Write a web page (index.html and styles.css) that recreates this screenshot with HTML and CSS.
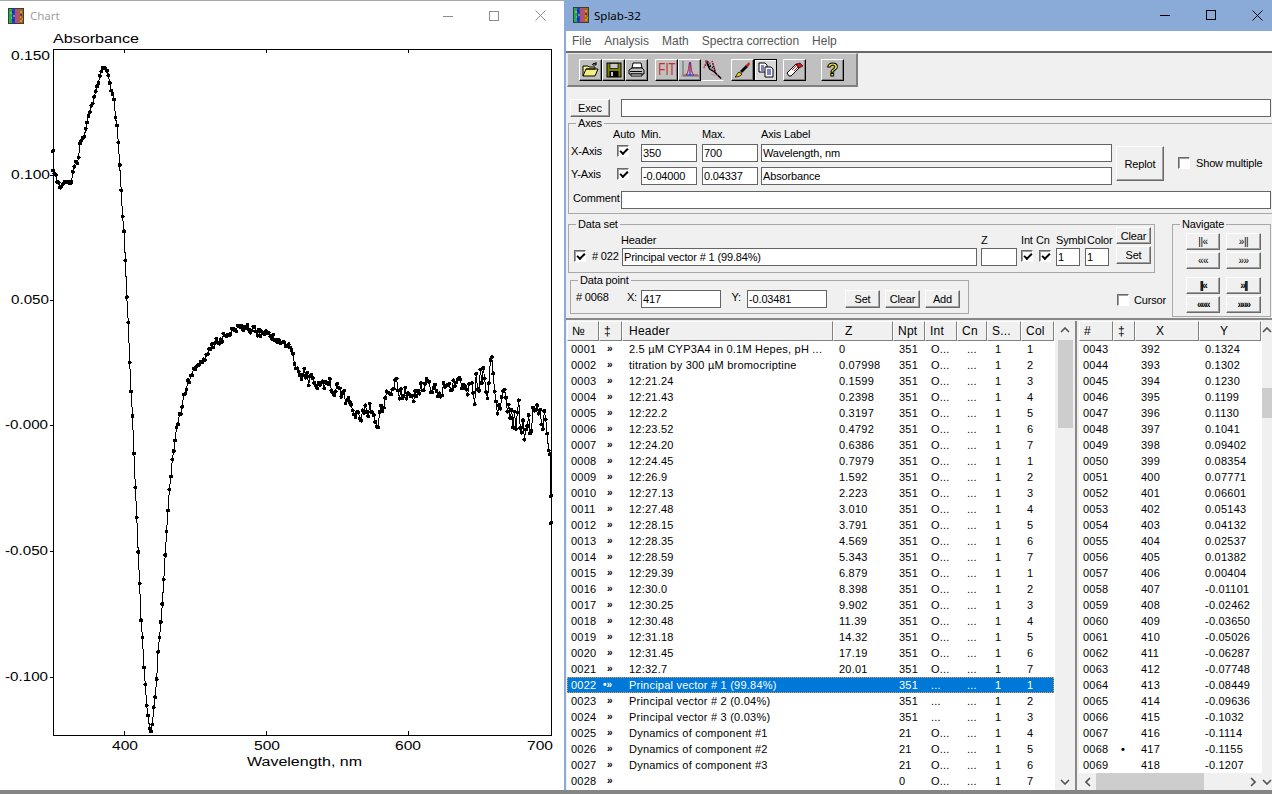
FILE: index.html
```html
<!DOCTYPE html>
<html lang="en">
<head>
<meta charset="utf-8">
<title>Splab-32</title>
<link rel="stylesheet" href="styles.css">
</head>
<body>
<svg class="defs" width="0" height="0" aria-hidden="true">
  <symbol id="appicon" viewBox="0 0 16 16">
    <rect width="16" height="16" fill="#3c3c3c"/>
    <rect x="1" y="1" width="3" height="14" fill="#1fb04c"/>
    <rect x="4" y="1" width="3" height="14" fill="#1c3fd0"/>
    <rect x="7" y="1" width="4" height="14" fill="#b0507a"/>
    <rect x="11" y="1" width="4" height="14" fill="#a8681c"/>
    <path d="M2 5h2M5 8h2M3 10h1M12 4h2M12 9h1M14 11h1M12 13h2" stroke="#e8d020" stroke-width="1"/>
    <path d="M4 4h2M12 7h2M4 12h2" stroke="#1010c0" stroke-width="1"/>
  </symbol>
  <symbol id="chev-up" viewBox="0 0 10 6"><path d="M1 5l4-4 4 4" fill="none" stroke="#505050" stroke-width="1.6"/></symbol>
  <symbol id="chev-down" viewBox="0 0 10 6"><path d="M1 1l4 4 4-4" fill="none" stroke="#505050" stroke-width="1.6"/></symbol>
  <symbol id="chev-left" viewBox="0 0 6 10"><path d="M5 1L1 5l4 4" fill="none" stroke="#505050" stroke-width="1.6"/></symbol>
  <symbol id="chev-right" viewBox="0 0 6 10"><path d="M1 1l4 4-4 4" fill="none" stroke="#505050" stroke-width="1.6"/></symbol>
</svg>

<main class="desktop">
  <section class="window chart-window">
    <header class="titlebar">
      <svg class="appicon"><use href="#appicon"/></svg>
      <span class="title title-dim">Chart</span>
      <span class="controls controls-dim">
        <svg width="10" height="10" viewBox="0 0 10 10"><path d="M0 5.5h10" stroke="currentColor"/></svg>
        <svg width="10" height="10" viewBox="0 0 10 10"><rect x=".5" y=".5" width="9" height="9" fill="none" stroke="currentColor"/></svg>
        <svg width="11" height="11" viewBox="0 0 11 11"><path d="M.5.5l10 10M10.5.5l-10 10" stroke="currentColor"/></svg>
      </span>
    </header>
    <svg id="plot" class="plot" width="564" height="760" viewBox="0 30 564 760">
      <g class="ax-text">
        <text x="53" y="42" textLength="86" lengthAdjust="spacingAndGlyphs">Absorbance</text>
        <text x="11" y="59" textLength="39" lengthAdjust="spacingAndGlyphs">0.150</text>
        <text x="11" y="178" textLength="39" lengthAdjust="spacingAndGlyphs">0.100</text>
        <text x="11" y="303" textLength="38" lengthAdjust="spacingAndGlyphs">0.050</text>
        <text x="5" y="428" textLength="43" lengthAdjust="spacingAndGlyphs">-0.000</text>
        <text x="5" y="554" textLength="43" lengthAdjust="spacingAndGlyphs">-0.050</text>
        <text x="5" y="680" textLength="43" lengthAdjust="spacingAndGlyphs">-0.100</text>
        <text x="112" y="749" textLength="26" lengthAdjust="spacingAndGlyphs">400</text>
        <text x="254" y="749" textLength="26" lengthAdjust="spacingAndGlyphs">500</text>
        <text x="395" y="749" textLength="26" lengthAdjust="spacingAndGlyphs">600</text>
        <text x="527" y="749" textLength="26" lengthAdjust="spacingAndGlyphs">700</text>
        <text x="247" y="765" textLength="115" lengthAdjust="spacingAndGlyphs">Wavelength, nm</text>
      </g>
      <path class="frame" d="M53.5 48.5H551.5V734.5H53.5ZM124.5 48v4M266.5 48v4M408.5 48v4M124.5 734v-4M266.5 734v-4M408.5 734v-4M50 174.5h4M50 299.5h4M50 424.5h4M50 550.5h4M50 676.5h4"/>
      <polyline id="curve" class="curve" points=""/>
      <path id="dots" class="dots" d=""/>
    </svg>
  </section>

  <section class="window main-window">
    <header class="titlebar titlebar-main">
      <svg class="appicon"><use href="#appicon"/></svg>
      <span class="title">Splab-32</span>
      <span class="controls">
        <svg width="10" height="10" viewBox="0 0 10 10"><path d="M0 5.5h10" stroke="currentColor"/></svg>
        <svg width="10" height="10" viewBox="0 0 10 10"><rect x=".5" y=".5" width="9" height="9" fill="none" stroke="currentColor"/></svg>
        <svg width="11" height="11" viewBox="0 0 11 11"><path d="M.5.5l10 10M10.5.5l-10 10" stroke="currentColor"/></svg>
      </span>
    </header>
    <nav class="menubar">
      <span>File</span><span>Analysis</span><span>Math</span><span>Spectra correction</span><span>Help</span>
    </nav>

    <div class="body">
      <div class="toolbar">
        <button class="tool">
          <svg width="18" height="16" viewBox="0 0 18 16"><path d="M1 14V4h5l1 1h6v2H4L1 14h12l3-7H4" fill="#f4f080" stroke="#000"/><path d="M10 3c1-2 3-2 4-1M14 0v3h-3" fill="none" stroke="#000"/></svg>
        </button>
        <button class="tool">
          <svg width="16" height="16" viewBox="0 0 16 16"><rect x="1" y="1" width="14" height="14" fill="#808000" stroke="#000"/><rect x="4" y="1.500" width="8" height="5" fill="#c8c8c8" stroke="#000" stroke-width=".7"/><rect x="3.500" y="9" width="9" height="6" fill="#000"/><rect x="5" y="10" width="2" height="4" fill="#c8c8c8"/></svg>
        </button>
        <button class="tool">
          <svg width="17" height="16" viewBox="0 0 17 16"><path d="M5 1h8l1 5H4z" fill="#fff" stroke="#000"/><path d="M1 8l3-2h10l2 2v4H1z" fill="#c0c0c0" stroke="#000"/><path d="M3 12h11v2H3z" fill="#fff" stroke="#000"/><path d="M2 9.500h12" stroke="#000"/></svg>
        </button>
        <button class="tool tool-gap fit"><span class="fit-text">FIT</span></button>
        <button class="tool">
          <svg width="20" height="19" viewBox="0 0 20 19"><path d="M3 1v15h16" fill="none" stroke="#507070"/><path d="M1 16h18" stroke="#80a0a0" stroke-dasharray="2 1"/><path d="M4 15c3 0 3-1 4-4s1-9 2-9 1 7 2 10 2 3 6 3" fill="none" stroke="#e01010"/><path d="M10 2v13M6 15h8" stroke="#1c1ce0"/></svg>
        </button>
        <button class="tool tool-flat">
          <svg width="22" height="22" viewBox="0 0 22 22"><path d="M4 1l4 9 5 3 7 7" fill="none" stroke="#000" stroke-width="1.500"/><path d="M2 9l3-8 3 3 3-2 3 10-6-3" fill="none" stroke="#c02060" stroke-width="1.200" stroke-dasharray="2 1"/><path d="M6 2l2 8M11 4l3 9M3 6h7M8 7l5 2" stroke="#000" stroke-width="1.200" stroke-dasharray="1.500 1"/><path d="M9 15l5 2 3-1" stroke="#d080a0" fill="none"/></svg>
        </button>
        <button class="tool tool-gap">
          <svg width="18" height="18" viewBox="0 0 18 18"><path d="M1 16c2-1 2-4 4-5l3 2c-1 2-4 3-7 3z" fill="#e8d020" stroke="#000" stroke-width=".8"/><path d="M6 10l6-6 2 2-6 6z" fill="#000"/><path d="M12 4l3-3 1 2-2 3z" fill="#d01818"/></svg>
        </button>
        <button class="tool tool-docs">
          <svg width="16" height="16" viewBox="0 0 16 16"><path d="M1 1h6l2 2v7H1z" fill="#fff" stroke="#000"/><path d="M7 5h6l2 2v8H7z" fill="#fff" stroke="#000"/><path d="M3 4h3M3 6h3M3 8h3" stroke="#000088"/><path d="M9 8h4M9 10h4M9 12h4" stroke="#000088"/></svg>
        </button>
        <button class="tool tool-gap6">
          <svg width="18" height="16" viewBox="0 0 18 16"><path d="M1 11L10 2l3 4-8 8H3z" fill="#fff" stroke="#000"/><path d="M10 2l4-1 3 3-4 2z" fill="#d01818" stroke="#000" stroke-width=".6"/><path d="M6 8l6-6M8 9l6-6" stroke="#d01818"/></svg>
        </button>
        <button class="tool tool-help">?</button>
      </div>

      <div class="exec-row">
        <button class="btn btn-exec">Exec</button>
        <span class="field field-long"></span>
      </div>

      <fieldset class="group group-axes">
        <legend>Axes</legend>
        <div class="axes-main">
          <div class="axes-rows">
            <div class="axes-row axes-head">
              <span class="c-label"></span><span class="c-auto">Auto</span><span class="c-min">Min.</span><span class="c-max">Max.</span><span>Axis Label</span>
            </div>
            <div class="axes-row">
              <span class="c-label c-pad">X-Axis</span>
              <span class="c-auto"><span class="check on"></span></span>
              <span class="field w56">350</span><span class="field w56 ml5">700</span><span class="field w351 ml3">Wavelength, nm</span>
            </div>
            <div class="axes-row">
              <span class="c-label c-pad">Y-Axis</span>
              <span class="c-auto"><span class="check on"></span></span>
              <span class="field w56">-0.04000</span><span class="field w56 ml5">0.04337</span><span class="field w351 ml3">Absorbance</span>
            </div>
          </div>
          <button class="btn btn-replot">Replot</button>
          <label class="show-multiple"><span class="check"></span><span>Show multiple</span></label>
        </div>
        <div class="comment-row">
          <span class="c-comment">Comment</span>
          <span class="field field-long"></span>
        </div>
      </fieldset>

      <div class="data-row">
        <div class="data-left">
          <fieldset class="group group-dataset">
            <legend>Data set</legend>
            <div class="dataset-inner">
              <div class="ds-left">
                <div class="ds-head">
                  <span class="d-a"></span><span class="d-h">Header</span><span class="d-z">Z</span><span class="d-i">Int</span><span class="d-c">Cn</span><span class="d-s">Symbl</span><span>Color</span>
                </div>
                <div class="ds-fields">
                  <span class="check on ds-check"></span>
                  <span class="ds-num"># 022</span>
                  <span class="field w355">Principal vector # 1 (99.84%)</span>
                  <span class="field w36 ml4"></span>
                  <span class="check on ds-int"></span>
                  <span class="check on ds-cn"></span>
                  <span class="field w24 ml5">1</span>
                  <span class="field w24 ml5">1</span>
                </div>
              </div>
              <div class="ds-buttons">
                <button class="btn btn-small">Clear</button>
                <button class="btn btn-small btn-set">Set</button>
              </div>
            </div>
          </fieldset>
          <div class="point-row">
            <fieldset class="group group-point">
              <legend>Data point</legend>
              <div class="point-inner">
                <span class="pt-num"># 0068</span>
                <span class="pt-x">X:</span>
                <span class="field w80">417</span>
                <span class="pt-y">Y:</span>
                <span class="field w80">-0.03481</span>
                <button class="btn btn-pt pt-first">Set</button>
                <button class="btn btn-pt pt-next">Clear</button>
                <button class="btn btn-pt pt-next">Add</button>
              </div>
            </fieldset>
            <label class="cursor"><span class="check"></span><span>Cursor</span></label>
          </div>
        </div>
        <fieldset class="group group-nav">
          <legend>Navigate</legend>
          <div class="nav-grid">
            <button class="btn nav">||«</button><button class="btn nav">»||</button>
            <button class="btn nav">««</button><button class="btn nav">»»</button>
          </div>
          <div class="nav-grid nav-bold">
            <button class="btn nav">||«</button><button class="btn nav">»||</button>
            <button class="btn nav">«««</button><button class="btn nav">»»»</button>
          </div>
        </fieldset>
      </div>

      <div class="lists">
        <div class="list list-left">
          <table class="rows rows-left">
            <thead><tr><th>№</th><th>‡</th><th>Header</th><th>Z</th><th>Npt</th><th>Int</th><th>Cn</th><th>S...</th><th>Col</th></tr></thead>
            <tbody>
              <tr><td>0001</td><td>»</td><td>2.5 µM CYP3A4 in 0.1M Hepes, pH ...</td><td>0</td><td>351</td><td>O...</td><td>...</td><td>1</td><td>1</td></tr>
              <tr><td>0002</td><td>»</td><td>titration by 300 µM bromocriptine</td><td>0.07998</td><td>351</td><td>O...</td><td>...</td><td>1</td><td>2</td></tr>
              <tr><td>0003</td><td>»</td><td>12:21.24</td><td>0.1599</td><td>351</td><td>O...</td><td>...</td><td>1</td><td>3</td></tr>
              <tr><td>0004</td><td>»</td><td>12:21.43</td><td>0.2398</td><td>351</td><td>O...</td><td>...</td><td>1</td><td>4</td></tr>
              <tr><td>0005</td><td>»</td><td>12:22.2</td><td>0.3197</td><td>351</td><td>O...</td><td>...</td><td>1</td><td>5</td></tr>
              <tr><td>0006</td><td>»</td><td>12:23.52</td><td>0.4792</td><td>351</td><td>O...</td><td>...</td><td>1</td><td>6</td></tr>
              <tr><td>0007</td><td>»</td><td>12:24.20</td><td>0.6386</td><td>351</td><td>O...</td><td>...</td><td>1</td><td>7</td></tr>
              <tr><td>0008</td><td>»</td><td>12:24.45</td><td>0.7979</td><td>351</td><td>O...</td><td>...</td><td>1</td><td>1</td></tr>
              <tr><td>0009</td><td>»</td><td>12:26.9</td><td>1.592</td><td>351</td><td>O...</td><td>...</td><td>1</td><td>2</td></tr>
              <tr><td>0010</td><td>»</td><td>12:27.13</td><td>2.223</td><td>351</td><td>O...</td><td>...</td><td>1</td><td>3</td></tr>
              <tr><td>0011</td><td>»</td><td>12:27.48</td><td>3.010</td><td>351</td><td>O...</td><td>...</td><td>1</td><td>4</td></tr>
              <tr><td>0012</td><td>»</td><td>12:28.15</td><td>3.791</td><td>351</td><td>O...</td><td>...</td><td>1</td><td>5</td></tr>
              <tr><td>0013</td><td>»</td><td>12:28.35</td><td>4.569</td><td>351</td><td>O...</td><td>...</td><td>1</td><td>6</td></tr>
              <tr><td>0014</td><td>»</td><td>12:28.59</td><td>5.343</td><td>351</td><td>O...</td><td>...</td><td>1</td><td>7</td></tr>
              <tr><td>0015</td><td>»</td><td>12:29.39</td><td>6.879</td><td>351</td><td>O...</td><td>...</td><td>1</td><td>1</td></tr>
              <tr><td>0016</td><td>»</td><td>12:30.0</td><td>8.398</td><td>351</td><td>O...</td><td>...</td><td>1</td><td>2</td></tr>
              <tr><td>0017</td><td>»</td><td>12:30.25</td><td>9.902</td><td>351</td><td>O...</td><td>...</td><td>1</td><td>3</td></tr>
              <tr><td>0018</td><td>»</td><td>12:30.48</td><td>11.39</td><td>351</td><td>O...</td><td>...</td><td>1</td><td>4</td></tr>
              <tr><td>0019</td><td>»</td><td>12:31.18</td><td>14.32</td><td>351</td><td>O...</td><td>...</td><td>1</td><td>5</td></tr>
              <tr><td>0020</td><td>»</td><td>12:31.45</td><td>17.19</td><td>351</td><td>O...</td><td>...</td><td>1</td><td>6</td></tr>
              <tr><td>0021</td><td>»</td><td>12:32.7</td><td>20.01</td><td>351</td><td>O...</td><td>...</td><td>1</td><td>7</td></tr>
              <tr class="sel"><td>0022</td><td class="mark">•»</td><td>Principal vector # 1 (99.84%)</td><td></td><td>351</td><td>...</td><td>...</td><td>1</td><td>1</td></tr>
              <tr><td>0023</td><td>»</td><td>Principal vector # 2 (0.04%)</td><td></td><td>351</td><td>...</td><td>...</td><td>1</td><td>2</td></tr>
              <tr><td>0024</td><td>»</td><td>Principal vector # 3 (0.03%)</td><td></td><td>351</td><td>...</td><td>...</td><td>1</td><td>3</td></tr>
              <tr><td>0025</td><td>»</td><td>Dynamics of component #1</td><td></td><td>21</td><td>O...</td><td>...</td><td>1</td><td>4</td></tr>
              <tr><td>0026</td><td>»</td><td>Dynamics of component #2</td><td></td><td>21</td><td>O...</td><td>...</td><td>1</td><td>5</td></tr>
              <tr><td>0027</td><td>»</td><td>Dynamics of component #3</td><td></td><td>21</td><td>O...</td><td>...</td><td>1</td><td>6</td></tr>
              <tr><td>0028</td><td>»</td><td></td><td></td><td>0</td><td>O...</td><td>...</td><td>1</td><td>7</td></tr>
            </tbody>
          </table>
          <div class="vscroll vscroll-left">
            <svg class="chev" width="10" height="6"><use href="#chev-up"/></svg>
            <div class="track"><div class="thumb thumb-left"></div></div>
            <svg class="chev" width="10" height="6"><use href="#chev-down"/></svg>
          </div>
        </div>
        <div class="splitter"></div>
        <div class="list list-right">
          <div class="right-main">
            <div class="right-clip">
              <table class="rows rows-right">
                <thead><tr><th>#</th><th>‡</th><th>X</th><th>Y</th></tr></thead>
                <tbody>
                  <tr><td>0043</td><td></td><td>392</td><td>0.1324</td></tr>
                  <tr><td>0044</td><td></td><td>393</td><td>0.1302</td></tr>
                  <tr><td>0045</td><td></td><td>394</td><td>0.1230</td></tr>
                  <tr><td>0046</td><td></td><td>395</td><td>0.1199</td></tr>
                  <tr><td>0047</td><td></td><td>396</td><td>0.1130</td></tr>
                  <tr><td>0048</td><td></td><td>397</td><td>0.1041</td></tr>
                  <tr><td>0049</td><td></td><td>398</td><td>0.09402</td></tr>
                  <tr><td>0050</td><td></td><td>399</td><td>0.08354</td></tr>
                  <tr><td>0051</td><td></td><td>400</td><td>0.07771</td></tr>
                  <tr><td>0052</td><td></td><td>401</td><td>0.06601</td></tr>
                  <tr><td>0053</td><td></td><td>402</td><td>0.05143</td></tr>
                  <tr><td>0054</td><td></td><td>403</td><td>0.04132</td></tr>
                  <tr><td>0055</td><td></td><td>404</td><td>0.02537</td></tr>
                  <tr><td>0056</td><td></td><td>405</td><td>0.01382</td></tr>
                  <tr><td>0057</td><td></td><td>406</td><td>0.00404</td></tr>
                  <tr><td>0058</td><td></td><td>407</td><td>-0.01101</td></tr>
                  <tr><td>0059</td><td></td><td>408</td><td>-0.02462</td></tr>
                  <tr><td>0060</td><td></td><td>409</td><td>-0.03650</td></tr>
                  <tr><td>0061</td><td></td><td>410</td><td>-0.05026</td></tr>
                  <tr><td>0062</td><td></td><td>411</td><td>-0.06287</td></tr>
                  <tr><td>0063</td><td></td><td>412</td><td>-0.07748</td></tr>
                  <tr><td>0064</td><td></td><td>413</td><td>-0.08449</td></tr>
                  <tr><td>0065</td><td></td><td>414</td><td>-0.09636</td></tr>
                  <tr><td>0066</td><td></td><td>415</td><td>-0.1032</td></tr>
                  <tr><td>0067</td><td></td><td>416</td><td>-0.1114</td></tr>
                  <tr><td>0068</td><td>•</td><td>417</td><td>-0.1155</td></tr>
                  <tr><td>0069</td><td></td><td>418</td><td>-0.1207</td></tr>
                </tbody>
              </table>
            </div>
            <div class="hscroll">
              <svg class="chev" width="6" height="10"><use href="#chev-left"/></svg>
              <div class="htrack"><div class="hthumb"></div></div>
              <svg class="chev" width="6" height="10"><use href="#chev-right"/></svg>
            </div>
          </div>
          <div class="vscroll vscroll-right">
            <svg class="chev" width="10" height="6"><use href="#chev-up"/></svg>
            <div class="track"><div class="thumb thumb-right"></div></div>
            <svg class="chev" width="10" height="6"><use href="#chev-down"/></svg>
          </div>
        </div>
      </div>
    </div>
  </section>
</main>
<script src="chart.js"></script>
</body>
</html>
```

FILE: styles.css
```css
* { box-sizing: border-box; }
html, body { margin: 0; padding: 0; height: 100%; overflow: hidden; }
body { font-family: "Liberation Sans", Arial, sans-serif; font-size: 11px; letter-spacing: -.15px; color: #000; }
.defs { position: absolute; }

.desktop { position: relative; width: 1272px; height: 794px; background: #858585; overflow: hidden; }
.window { position: absolute; top: 0; height: 790px; overflow: hidden; display: flex; flex-direction: column; }
.chart-window { left: 0; width: 564px; background: #fff; border-top: 1px solid #a8a8a8; }
.main-window { left: 564px; width: 708px; background: #f0f0f0; border-left: 2px solid #8aabd8; }

.titlebar { flex: none; height: 30px; display: flex; align-items: center; padding-left: 8px; font-family: "Noto Sans", sans-serif; font-size: 11.5px; letter-spacing: 0; }
.titlebar-main { height: 31px; background: #8aabd8; padding-left: 7px; }
.appicon { width: 16px; height: 16px; flex: none; margin-top: -1px; }
.title { margin-left: 6px; margin-top: -1px; }
.titlebar-main .title { margin-left: 5px; }
.title-dim { color: #a0a0a0; }
.controls { margin-left: auto; display: flex; align-items: center; gap: 36px; padding-right: 9px; margin-top: -1px; color: #000; }
.controls-dim { color: #8c8c8c; padding-right: 18px; }

.plot { display: block; flex: none; }
.ax-text text { font-family: "Liberation Sans", sans-serif; font-size: 12px; fill: #000; letter-spacing: 0; }
.frame { fill: none; stroke: #000; stroke-width: 1; shape-rendering: crispEdges; }
.curve { fill: none; stroke: #000; stroke-width: 1; shape-rendering: crispEdges; }
.dots { fill: none; stroke: #000; stroke-width: 4; stroke-linecap: round; shape-rendering: crispEdges; }

.menubar { flex: none; height: 20px; background: #fff; display: flex; align-items: center; gap: 13px; padding-left: 6px; font-size: 12px; letter-spacing: 0; color: #555; }

.body { flex: 1; min-height: 0; display: flex; flex-direction: column; border-top: 2px solid #696969; background: #f0f0f0; }

.toolbar { flex: none; width: 291px; height: 34px; margin-left: 1px; background: #c0c0c0; border: 1px solid #e8e8e8; border-right: 2px solid #808080; border-bottom: 2px solid #808080; display: flex; align-items: center; padding-left: 11px; }
.tool { width: 23px; height: 22px; padding: 0; flex: none; background: #c0c0c0; border: 1px solid; border-color: #fff #000 #000 #fff; box-shadow: inset -1px -1px 0 #808080; display: flex; align-items: center; justify-content: center; overflow: hidden; }
.tool-gap { margin-left: 7px; }
.tool-gap6 { margin-left: 6px; }
.tool-flat { border-color: #c0c0c0 #c0c0c0 #fff #c0c0c0; box-shadow: none; }
.tool-docs { background: #d8d8d8; border-color: #000; box-shadow: inset 1px 1px 0 #fff; }
.fit { font-family: "Liberation Sans", sans-serif; font-size: 16px; color: #d02828; letter-spacing: 0; }
.fit-text { display: inline-block; transform: scaleX(.72); }
.tool-help { margin-left: 15px; font-family: "Liberation Sans", sans-serif; font-size: 19px; font-weight: bold; color: #ffff30; -webkit-text-stroke: 1px #000; }

.exec-row { flex: none; display: flex; margin-top: 12px; padding-left: 4px; }
.btn { padding: 0; background: #f0f0f0; font: inherit; letter-spacing: inherit; color: #000; border: 1px solid; border-color: #fff #696969 #696969 #fff; box-shadow: inset -1px -1px 0 #a0a0a0; }
.btn-exec { width: 40px; height: 18px; margin-right: 11px; flex: none; }
.field { display: block; flex: none; height: 18px; background: #fff; border: 1px solid #646464; line-height: 17px; padding-left: 1px; white-space: nowrap; overflow: hidden; }
.field-long { width: 650px; }
.w24 { width: 24px; }
.w36 { width: 36px; }
.w56 { width: 56px; }
.w80 { width: 80px; }
.w351 { width: 351px; }
.w355 { width: 355px; }
.ml3 { margin-left: 3px; }
.ml4 { margin-left: 4px; }
.ml5 { margin-left: 5px; }

.group { margin: 0; padding: 0; min-width: 0; border: 1px solid #a8a8a8; }
.group legend { margin-left: 7px; padding: 0 2px; line-height: 12px; height: 12px; }
.group-axes { flex: none; margin-left: 2px; margin-right: -4px; padding-bottom: 4px; border-right: 0; }

.axes-main { display: flex; }
.axes-rows { width: 543px; flex: none; display: flex; flex-direction: column; }
.axes-row { display: flex; align-items: flex-start; height: 18px; margin-bottom: 5px; }
.axes-head { height: 15px; margin-bottom: 0; line-height: 10px; }
.c-label { width: 44px; flex: none; line-height: 14px; }
.c-pad { padding-left: 2px; }
.c-auto { width: 28px; flex: none; }
.c-auto .check { margin: 1px 0 0 4px; }
.c-min { width: 61px; flex: none; }
.c-max { width: 59px; flex: none; }

.check { display: block; position: relative; width: 12px; height: 12px; flex: none; background: #fff; border: 1px solid; border-color: #696969 #fff #fff #696969; box-shadow: inset 1px 1px 0 #a0a0a0; }
.check.on::after { content: ""; position: absolute; left: 2px; top: 2px; width: 6px; height: 3px; transform: rotate(-45deg); border-left: 2px solid #000; border-bottom: 2px solid #000; }

.btn-replot { width: 48px; height: 35px; margin: 17px 0 0 4px; flex: none; }
.show-multiple { display: flex; align-items: center; gap: 6px; margin: 28px 0 0 14px; height: 12px; }

.comment-row { display: flex; margin-top: 1px; }
.c-comment { width: 52px; flex: none; padding-left: 4px; line-height: 14px; }

.data-row { flex: none; display: flex; margin-top: 4px; margin-left: 2px; height: 98px; }
.data-left { width: 587px; flex: none; }
.group-dataset { height: 55px; }
.dataset-inner { display: flex; }
.ds-left { width: 540px; flex: none; }
.ds-head { display: flex; height: 18px; padding-top: 3px; line-height: 14px; }
.d-a { width: 52px; flex: none; }
.d-h { width: 360px; flex: none; }
.d-z { width: 40px; flex: none; }
.d-i { width: 15px; flex: none; }
.d-c { width: 20px; flex: none; }
.d-s { width: 31px; flex: none; }
.ds-fields { display: flex; align-items: flex-start; }
.ds-check { margin: 2px 0 0 5px; }
.ds-num { width: 36px; padding-left: 6px; line-height: 16px; white-space: nowrap; }
.ds-int { margin: 2px 0 0 4px; }
.ds-cn { margin: 2px 0 0 6px; }
.ds-buttons { display: flex; flex-direction: column; margin: -3px 0 0 7px; }
.btn-small { width: 35px; height: 17px; }
.btn-set { height: 18px; margin-top: 2px; }

.point-row { display: flex; margin-top: 1px; }
.group-point { width: 399px; flex: none; margin-left: 2px; height: 40px; }
.point-inner { display: flex; align-items: flex-start; padding-top: 4px; }
.pt-num { width: 51px; padding-left: 5px; line-height: 14px; }
.pt-x { width: 19px; line-height: 14px; text-align: right; padding-right: 4px; }
.pt-y { width: 26px; line-height: 14px; text-align: right; padding-right: 6px; }
.btn-pt { width: 35px; height: 18px; flex: none; }
.pt-first { margin-left: 18px; }
.pt-next { margin-left: 5px; }
.cursor { display: flex; align-items: center; gap: 5px; margin: 20px 0 0 148px; height: 12px; }

.group-nav { width: 99px; height: 99px; flex: none; margin-left: 17px; }
.nav-grid { display: grid; grid-template-columns: 34px 35px; column-gap: 6px; row-gap: 2px; grid-auto-rows: 17px; margin: 3px 0 0 13px; }
.nav-bold { margin-top: 8px; font-weight: bold; }
.nav { font-size: 10px; line-height: 13px; letter-spacing: -.5px; }
.nav-bold .nav { font-size: 10px; font-weight: bold; letter-spacing: -1.5px; }

.lists { flex: 1; min-height: 0; display: flex; border-top: 2px solid #888; margin-top: 2px; padding-top: 1px; padding-left: 1px; }
.list { display: flex; background: #fff; min-height: 0; overflow: hidden; }
.list-left { width: 508px; flex: none; }
.list-right { flex: 1; min-width: 0; }
.splitter { width: 4px; flex: none; border-left: 2px solid #888; background: #f0f0f0; }

.rows { border-collapse: separate; border-spacing: 0; table-layout: fixed; font-size: 11px; letter-spacing: .22px; background: #fff; }
.rows-left { width: 487px; flex: none; align-self: flex-start; }
.rows th { height: 20px; padding: 0 0 0 4px; font-weight: normal; text-align: left; background: #f0f0f0; border: 1px solid; border-color: #fff #808080 #808080 #fff; white-space: nowrap; overflow: hidden; font-size: 12px; }
.rows td { height: 16px; padding: 0; white-space: nowrap; overflow: hidden; line-height: 16px; }

.rows-left th:nth-child(1) { width: 32px; }
.rows-left th:nth-child(2) { width: 23px; }
.rows-left th:nth-child(3) { width: 211px; padding-left: 6px; }
.rows-left th:nth-child(4) { width: 60px; padding-left: 11px; }
.rows-left th:nth-child(5) { width: 32px; }
.rows-left th:nth-child(6) { width: 32px; }
.rows-left th:nth-child(7) { width: 30px; }
.rows-left th:nth-child(8) { width: 34px; }
.rows-left th:nth-child(9) { width: 33px; }
.rows-left td:nth-child(1) { padding-left: 4px; }
.rows-left td:nth-child(2) { padding-left: 8px; font-size: 10px; font-weight: bold; }
.rows-left td:nth-child(3) { padding-left: 7px; }
.rows-left td:nth-child(4) { padding-left: 6px; }
.rows-left td:nth-child(5) { padding-left: 6px; }
.rows-left td:nth-child(6) { padding-left: 6px; }
.rows-left td:nth-child(7) { padding-left: 10px; }
.rows-left td:nth-child(8) { padding-left: 8px; }
.rows-left td:nth-child(9) { padding-left: 6px; }
.rows-left td.mark { padding-left: 4px; letter-spacing: 0; }

.rows tr.sel td { background: #0078d7; color: #fff; }
.rows tr.sel { outline: 1px dotted #e8a040; outline-offset: -1px; }

.rows-right { width: 182px; }
.rows-right th:nth-child(1) { width: 34px; }
.rows-right th:nth-child(2) { width: 22px; }
.rows-right th:nth-child(3) { width: 64px; padding-left: 20px; }
.rows-right th:nth-child(4) { width: 62px; padding-left: 20px; }
.rows-right td:nth-child(1) { padding-left: 4px; }
.rows-right td:nth-child(2) { padding-left: 8px; font-weight: bold; }
.rows-right td:nth-child(3) { padding-left: 6px; }
.rows-right td:nth-child(4) { padding-left: 6px; }

.vscroll { flex: none; display: flex; flex-direction: column; align-items: center; background: #f0f0f0; }
.vscroll-left { width: 20px; margin-left: 1px; padding-bottom: 5px; }
.vscroll-right { width: 10px; padding-bottom: 5px; overflow: hidden; }
.chev { flex: none; display: block; margin-top: 6px; }
.track { flex: 1; width: 100%; padding-top: 7px; min-height: 0; }
.thumb { background: #cdcdcd; }
.thumb-left { width: 15px; height: 88px; margin: 0 auto; }
.thumb-right { width: 100%; height: 30px; margin-top: 48px; }

.right-main { width: 183px; flex: none; display: flex; flex-direction: column; min-height: 0; }
.right-clip { flex: 1; min-height: 0; overflow: hidden; }
.hscroll { flex: none; height: 17px; background: #f0f0f0; display: flex; align-items: center; padding: 0 6px; }
.hscroll .chev { margin-top: 0; }
.htrack { flex: 1; padding: 0 5px; height: 100%; }
.hthumb { width: 108px; height: 100%; background: #cdcdcd; }
```

FILE: chart.js
```js
// Draws the spectrum on the chart: one marker per nanometre, 350–700 nm.
(function () {
  var X = function (nm) { return 53 + (nm - 350) * 1.42; };
  var Y = function (v) { return 425 - v * 2507; };

  var measured = {
    392: .1324, 393: .1302, 394: .123, 395: .1199, 396: .113, 397: .1041, 398: .09402,
    399: .08354, 400: .07771, 401: .06601, 402: .05143, 403: .04132, 404: .02537,
    405: .01382, 406: .00404, 407: -.01101, 408: -.02462, 409: -.0365, 410: -.05026,
    411: -.06287, 412: -.07748, 413: -.08449, 414: -.09636, 415: -.1032, 416: -.1114,
    417: -.1155, 418: -.1207
  };

  var outline = [
    [53, 170], [56, 176], [60, 186], [63, 183], [67, 181], [71, 183], [74, 165], [78, 160],
    [80, 143], [84, 135], [88, 118], [92, 104], [95, 92], [98, 83], [100, 73], [105, 64],
    [108, 74], [112, 93], [150, 733], [152, 728], [154, 704], [156, 691], [158, 652],
    [161, 620], [162, 609], [166, 540], [170, 480], [176, 430], [183, 400], [190, 375],
    [205, 355], [215, 342], [225, 335], [240, 327], [250, 328], [270, 335], [290, 345],
    [296, 365], [310, 380], [330, 385], [342, 388], [357, 417], [370, 408], [377, 422],
    [395, 378], [400, 392], [415, 397], [425, 383], [442, 390], [455, 380], [473, 393],
    [478, 378], [487, 385], [493, 370], [497, 403], [507, 397], [515, 420], [518, 407],
    [523, 425], [538, 413], [542, 430], [545, 422], [550, 440]
  ];

  function baseline(x) {
    for (var i = 1; i < outline.length; i++) {
      if (x <= outline[i][0]) {
        var a = outline[i - 1], b = outline[i];
        return a[1] + (b[1] - a[1]) * (x - a[0]) / (b[0] - a[0]);
      }
    }
    return outline[outline.length - 1][1];
  }

  var seed = 12345;
  function rnd() {
    seed = (seed * 1103515 + 12345) % 2147483648;
    return seed / 2147483648 - 0.5;
  }

  function amplitude(x) {
    if (x < 112) return 4;
    if (x < 170) return 0.6;
    if (x < 300) return 8;
    if (x < 470) return 16;
    if (x < 500) return 36;
    return 30;
  }

  var pts = [[53, 150]];
  for (var nm = 350; nm <= 700; nm++) {
    var x = X(nm);
    var y = measured[nm] !== undefined ? Y(measured[nm]) : baseline(x) + rnd() * amplitude(x);
    pts.push([x, y]);
  }
  pts.push([551, 495], [551, 522]);

  var line = pts.map(function (p) { return p[0].toFixed(1) + "," + p[1].toFixed(1); }).join(" ");
  var dots = pts.map(function (p) { return "M" + p[0].toFixed(1) + " " + p[1].toFixed(1) + "h0"; }).join("");
  document.getElementById("curve").setAttribute("points", line);
  document.getElementById("dots").setAttribute("d", dots);
})();
```
